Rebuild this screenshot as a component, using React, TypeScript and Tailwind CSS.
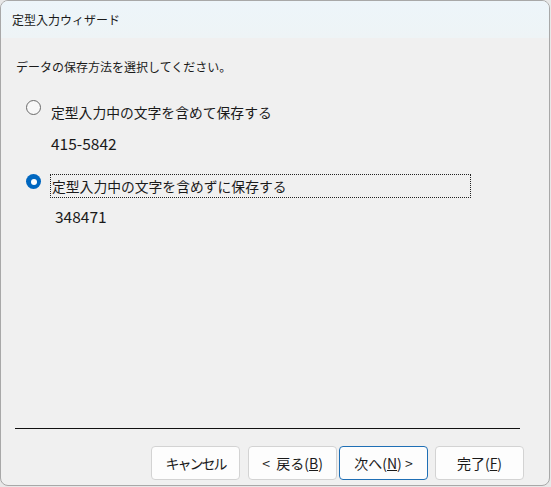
import React from "react";

const font = { fontFamily: '"Noto Sans CJK JP", "Noto Sans", sans-serif' };

function Btn({ children, primary }: { children: React.ReactNode; primary?: boolean }) {
  return (
    <div
      className={`flex h-[34px] w-[89px] items-center justify-center rounded-[4px] border bg-[#fdfdfd] text-[14px] text-[#1a1a1a] ${
        primary ? "border-[#1f6fb5]" : "border-[#d3d3d3]"
      }`}
    >
      {children}
    </div>
  );
}

export default function App() {
  return (
    <div className="h-[487px] w-[551px] bg-[#e8e8e8]" style={font}>
      <div className="flex h-[486px] w-[550px] flex-col overflow-hidden rounded-[8px] border border-[#a8a8a8] bg-[#f0f0f0]">
        <div className="flex h-[37px] items-center bg-gradient-to-b from-[#edf5fa] to-[#eef4f6] pl-[11px] text-[12px] text-[#1a1a1a]">
          定型入力ウィザード
        </div>
        <div className="flex flex-1 flex-col">
          <div className="pl-[15px] pt-[19px] text-[12px] leading-[20px] text-[#1a1a1a]">
            データの保存方法を選択してください。
          </div>
          <div className="mt-[23px] flex items-start pl-[25px]">
            <div className="h-[15px] w-[15px] rounded-full border border-[#6a6a6a] bg-[#f7f7f7]" />
            <div className="ml-[10px] mt-[2px] text-[13.8px] leading-[20px] text-[#1a1a1a]">
              定型入力中の文字を含めて保存する
            </div>
          </div>
          <div className="mt-[11px] pl-[50px] text-[15.5px] leading-[20px] text-[#1a1a1a]">415-5842</div>
          <div className="mt-[21px] flex items-start pl-[25px]">
            <div className="flex h-[15px] w-[15px] items-center justify-center rounded-full bg-[#0067c0]">
              <div className="h-[6px] w-[6px] rounded-full bg-white" />
            </div>
            <div className="ml-[9px] flex h-[24px] w-[421px] items-center border border-dotted border-[#222] pl-[1px] text-[13.8px] text-[#1a1a1a]">
              定型入力中の文字を含めずに保存する
            </div>
          </div>
          <div className="mt-[8px] pl-[54px] text-[15.5px] leading-[20px] text-[#1a1a1a]">348471</div>
          <div className="flex-1" />
          <div className="ml-[14px] mr-[29px] h-px bg-[#111]" />
          <div className="mb-[5px] mt-[17px] flex justify-end pr-[25px]">
            <div className="mr-[8px]">
              <Btn>
                <span className="tracking-[-2px]">キャンセル</span>
              </Btn>
            </div>
            <div className="mr-[2px]">
              <Btn>
                &lt;&nbsp; 戻る(<span className="underline">B</span>)
              </Btn>
            </div>
            <div className="mr-[7px]">
              <Btn primary>
                次へ(<span className="underline">N</span>) &gt;
              </Btn>
            </div>
            <Btn>
              完了(<span className="underline">F</span>)
            </Btn>
          </div>
        </div>
      </div>
    </div>
  );
}
